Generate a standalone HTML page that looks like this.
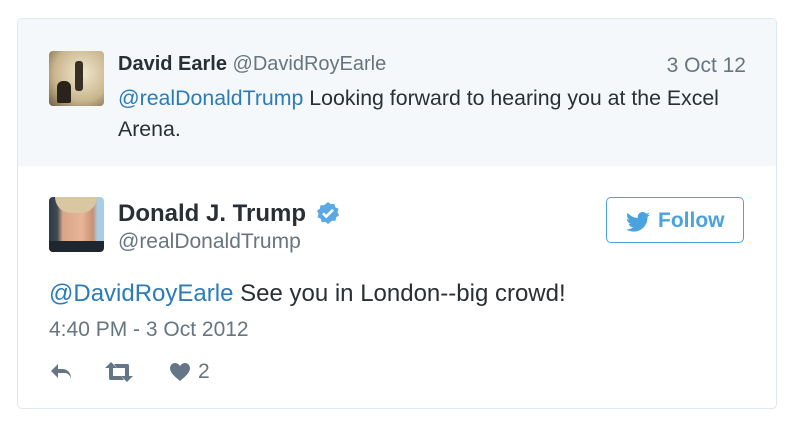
<!DOCTYPE html>
<html><head><meta charset="utf-8"><style>
body{margin:0;background:#fff;font-family:"Liberation Sans",sans-serif;width:799px;height:433px;position:relative;overflow:hidden}
.card{position:absolute;left:17px;top:18px;width:758px;height:389px;border:1px solid #e1e8ed;border-radius:5px;overflow:hidden;background:#fff}
.quote{position:absolute;left:0;top:0;width:100%;height:147px;background:#f5f8fa}
.abs{position:absolute;white-space:nowrap}
.blue{color:#2b7bb9}
.grey{color:#66757f}
</style></head><body>
<div class="card">
<div class="quote"></div>
<div class="abs" style="left:31px;top:32px;width:55px;height:55px;border-radius:4px;background:radial-gradient(circle at 60% 40%,#f2e8cf,#c9b68e 60%,#6b5d45);overflow:hidden">
<div style="position:absolute;left:26px;top:10px;width:8px;height:30px;background:#3a2f24;border-radius:3px"></div>
<div style="position:absolute;left:8px;top:30px;width:14px;height:22px;background:#2a231c;border-radius:6px 6px 2px 2px"></div>
</div>
<div class="abs" style="left:100px;top:34px;font-size:20px;color:#292f33"><b>David Earle</b> <span class="grey">@DavidRoyEarle</span></div>
<div class="abs grey" style="right:30px;top:35px;font-size:21px">3 Oct 12</div>
<div class="abs" style="left:100px;top:64px;font-size:21.3px;line-height:31px;color:#292f33"><span class="blue">@realDonaldTrump</span> Looking forward to hearing you at the Excel<br>Arena.</div>

<div class="abs" style="left:31px;top:178px;width:55px;height:55px;border-radius:4px;background:linear-gradient(90deg,#2d3b48 0,#3e4a54 15%,#d9a58a 25%,#e8b598 60%,#c89070 80%,#a8cde6 88%);overflow:hidden">
<div style="position:absolute;left:6px;top:0;width:42px;height:16px;background:#d8c7a0;border-radius:0 0 20px 20px"></div>
<div style="position:absolute;left:0;top:44px;width:55px;height:11px;background:#1e2730"></div>
</div>
<div class="abs" style="left:100px;top:181px;font-size:24px;font-weight:bold;color:#292f33">Donald J. Trump</div>
<svg class="abs" style="left:298px;top:182px" width="24" height="24" viewBox="0 0 24 24"><path fill="#5aa9e6" d="M12 1l2.8 2.2 3.5-.4 1 3.4 3.2 1.6-1 3.4 1.6 3.2-3 1.8-.6 3.5-3.5.1L12 23l-2.8-2.2-3.5.4-1-3.4-3.2-1.6 1-3.4L.9 9.6l3-1.8.6-3.5 3.5-.1z"/><path d="M7 12.3l3.2 3.2L17 8.8" stroke="#fff" stroke-width="2.6" fill="none"/></svg>
<div class="abs grey" style="left:100px;top:211px;font-size:21px">@realDonaldTrump</div>
<div class="abs" style="left:588px;top:178px;width:138px;height:46px;border:1px solid #4aa3df;border-radius:5px;box-sizing:border-box"></div>
<svg class="abs" style="left:608px;top:193px" width="24" height="20" viewBox="0 0 24 20"><path fill="#4aa3df" d="M24 2.4c-.9.4-1.8.6-2.8.8 1-.6 1.8-1.6 2.2-2.7-1 .6-2 1-3.1 1.2C19.3.6 18 0 16.6 0c-2.7 0-4.9 2.2-4.9 4.9 0 .4 0 .8.1 1.1C7.7 5.8 4.1 3.9 1.7.9c-.4.7-.7 1.6-.7 2.5 0 1.700.9 3.2 2.2 4.1-.8 0-1.6-.2-2.2-.6v.1c0 2.4 1.7 4.4 3.9 4.8-.4.1-.8.2-1.3.2-.3 0-.6 0-.9-.1.6 2 2.4 3.4 4.6 3.4-1.7 1.3-3.8 2.1-6.1 2.1-.4 0-.8 0-1.2-.1C2.2 18.8 4.8 19.6 7.5 19.6c9.1 0 14-7.5 14-14v-.6c1-.7 1.8-1.6 2.5-2.6z"/></svg>
<div class="abs" style="left:640px;top:190px;font-size:21px;font-weight:bold;color:#4aa3df">Follow</div>

<div class="abs" style="left:31px;top:261px;font-size:24px;color:#292f33"><span class="blue">@DavidRoyEarle</span> See you in London--big crowd!</div>
<div class="abs grey" style="left:31px;top:299px;font-size:21px">4:40 PM - 3 Oct 2012</div>

<svg class="abs" style="left:31px;top:343px" width="26" height="20" viewBox="0 0 26 20"><path d="M9 2L2 9l7 7V11h6c4 0 6 2 7 6 0-6-3-10-9-10H9z" fill="#657786"/></svg>
<svg class="abs" style="left:86px;top:342px" width="30" height="22" viewBox="0 0 30 22"><path fill="#657786" d="M7 1l6 6H9v8h8l3 4H7c-1.5 0-2-.5-2-2V7H1zM23 21l-6-6h4V7h-8l-3-4h13c1.5 0 2 .5 2 2v10h4z"/></svg>
<svg class="abs" style="left:151px;top:343px" width="22" height="20" viewBox="0 0 22 20"><path fill="#657786" d="M11 19C5 14 1 10.5 1 6.3 1 3.3 3.300 1 6 1c2.2 0 3.8 1.3 5 3 1.2-1.7 2.8-3 5-3 2.7 0 5 2.3 5 5.3 0 4.200-4 7.700-10 12.700z"/></svg>
<div class="abs grey" style="left:180px;top:341px;font-size:21px">2</div>
</div>
</body></html>
